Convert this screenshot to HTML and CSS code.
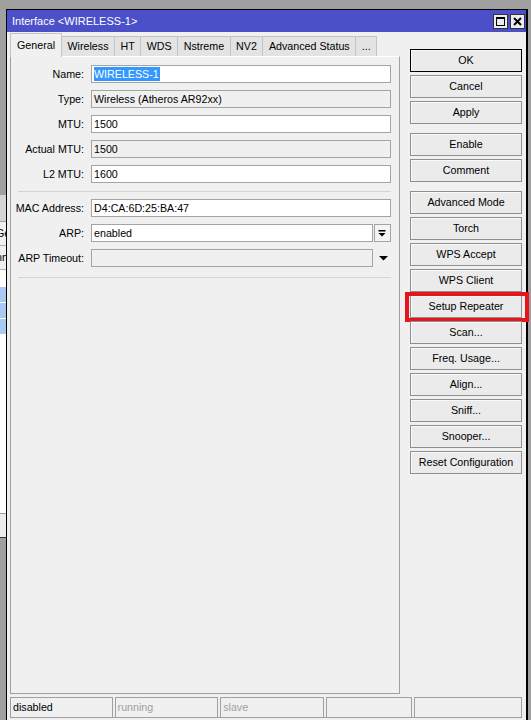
FILE: index.html
```html
<!DOCTYPE html>
<html>
<head>
<meta charset="utf-8">
<link rel="stylesheet" href="styles.css">
</head>
<body>
<div class="desktop">
  <div class="bgwin">
    <div class="bg-head"></div>
    <div class="bg-row"><span class="bg-text">Ge</span></div>
    <div class="bg-row"><span class="bg-text">nn</span></div>
    <div class="bg-gap"></div>
    <div class="bg-sel"></div>
    <div class="bg-sel"></div>
    <div class="bg-sel"></div>
    <div class="bg-white"></div>
    <div class="bg-foot"></div>
  </div>

  <div class="win">
    <div class="titlebar">
      <span class="title">Interface &lt;WIRELESS-1&gt;</span>
      <div class="tbtns">
        <span class="tbtn">
          <svg width="15" height="15" viewBox="0 0 15 15"><rect x="3.5" y="3.5" width="8" height="8" fill="none" stroke="#000" stroke-width="1"/><rect x="3" y="3" width="9" height="2" fill="#000"/></svg>
        </span>
        <span class="tbtn">
          <svg width="15" height="15" viewBox="0 0 15 15"><path d="M4 4 L11 11 M11 4 L4 11" stroke="#000" stroke-width="2" fill="none"/></svg>
        </span>
      </div>
    </div>

    <div class="body">
      <div class="leftcol">
        <div class="tabs">
          <div class="tab active">General</div>
          <div class="tab">Wireless</div>
          <div class="tab">HT</div>
          <div class="tab">WDS</div>
          <div class="tab">Nstreme</div>
          <div class="tab">NV2</div>
          <div class="tab">Advanced Status</div>
          <div class="tab">...</div>
        </div>
        <div class="panel">
          <div class="group">
            <div class="row"><label class="lbl">Name:</label><div class="field"><span class="sel">WIRELESS-1</span></div></div>
            <div class="row"><label class="lbl">Type:</label><div class="field ro">Wireless (Atheros AR92xx)</div></div>
            <div class="row"><label class="lbl">MTU:</label><div class="field">1500</div></div>
            <div class="row"><label class="lbl">Actual MTU:</label><div class="field ro">1500</div></div>
            <div class="row"><label class="lbl">L2 MTU:</label><div class="field">1600</div></div>
          </div>
          <div class="sep"></div>
          <div class="group">
            <div class="row"><label class="lbl">MAC Address:</label><div class="field">D4:CA:6D:25:BA:47</div></div>
            <div class="row"><label class="lbl">ARP:</label>
              <div class="combo">
                <div class="field">enabled</div>
                <div class="dd">
                  <svg width="15" height="16" viewBox="0 0 15 16"><rect x="3.5" y="5" width="7" height="1.5" fill="#000"/><polygon points="3.5,8 10.5,8 7,11.5" fill="#000"/></svg>
                </div>
              </div>
            </div>
            <div class="row"><label class="lbl">ARP Timeout:</label>
              <div class="combo">
                <div class="field ro"></div>
                <div class="dd plain">
                  <svg width="17" height="18" viewBox="0 0 17 18"><polygon points="5,7 14,7 9.5,11.5" fill="#000"/></svg>
                </div>
              </div>
            </div>
          </div>
          <div class="sep sep2"></div>
        </div>
      </div>

      <div class="btncol">
        <div class="btn ok">OK</div>
        <div class="btn">Cancel</div>
        <div class="btn">Apply</div>
        <div class="btn grp">Enable</div>
        <div class="btn">Comment</div>
        <div class="btn grp">Advanced Mode</div>
        <div class="btn">Torch</div>
        <div class="btn">WPS Accept</div>
        <div class="btn">WPS Client</div>
        <div class="btn hl">Setup Repeater<span class="redbox"></span></div>
        <div class="btn">Scan...</div>
        <div class="btn">Freq. Usage...</div>
        <div class="btn">Align...</div>
        <div class="btn">Sniff...</div>
        <div class="btn">Snooper...</div>
        <div class="btn">Reset Configuration</div>
      </div>

      <div class="status">
        <div class="cell c1">disabled</div>
        <div class="cell c2 dim">running</div>
        <div class="cell c3 dim">slave</div>
        <div class="cell c4"></div>
        <div class="cell c5"></div>
      </div>
      <div class="bottomline"></div>
    </div>
  </div>
</div>
</body>
</html>
```

FILE: styles.css
```css
html, body {
  margin: 0;
  padding: 0;
}
body {
  background: #a0a0a0;
  font-family: "Liberation Sans", Arial, sans-serif;
  font-size: 10.7px;
  color: #000;
  overflow: hidden;
}
.desktop {
  position: relative;
  width: 531px;
  height: 720px;
  overflow: hidden;
}

/* background window peeking out at the left edge */
.bgwin {
  position: absolute;
  left: 0;
  top: 195px;
  width: 40px;
  display: flex;
  flex-direction: column;
  background: #fff;
}
.bg-head {
  height: 26px;
  background: #d5d5d5;
  border-bottom: 1px solid #a0a0a0;
}
.bg-row {
  height: 23px;
  background: #f0f0f0;
  border-bottom: 1px solid #b0b0b0;
  line-height: 23px;
  white-space: nowrap;
  overflow: hidden;
}
.bg-text {
  display: inline-block;
  margin-left: -4px;
}
.bg-gap {
  height: 17px;
  background: #fff;
}
.bg-sel {
  height: 15px;
  background: #a9c9f0;
  border-bottom: 1px solid #fff;
}
.bg-white {
  height: 178px;
  background: #fff;
  border-bottom: 1px solid #a0a0a0;
}
.bg-foot {
  height: 23px;
  background: #ececec;
  border-bottom: 1px solid #303030;
}

/* main window */
.win {
  position: absolute;
  left: 6px;
  top: 9px;
  width: 519px;
  height: 730px;
  border: 1px solid #000;
  border-right-width: 2px;
  background: #f0f0f0;
}
.titlebar {
  height: 22px;
  background: #4b50c9;
  color: #fff;
  display: flex;
  align-items: center;
  justify-content: space-between;
  padding: 0 1px 0 5px;
}
.title {
  font-size: 11px;
}
.tbtns {
  display: flex;
  gap: 2px;
}
.tbtn {
  width: 15px;
  height: 15px;
  box-sizing: border-box;
  background: #ececec;
  border: 1px solid #333;
  display: flex;
  align-items: center;
  justify-content: center;
}
.tbtn svg {
  display: block;
  margin: -1px;
}

.body {
  display: grid;
  grid-template-columns: 390px 112px;
  column-gap: 10px;
  padding: 1px 0 0 3px;
}

/* tabs */
.tabs {
  display: flex;
  align-items: flex-end;
  height: 23px;
  position: relative;
  z-index: 2;
}
.tab {
  height: 20px;
  box-sizing: border-box;
  padding: 0 5.5px;
  border: 1px solid #c4c4c4;
  border-bottom: none;
  margin-left: -1px;
  background: #e3e3e3;
  line-height: 19px;
  white-space: nowrap;
}
.tab.active {
  height: 24px;
  margin-left: 0;
  margin-bottom: -1px;
  background: #f0f0f0;
  border-color: #c4c4c4;
  line-height: 22px;
  padding: 0 6px;
}

.panel {
  height: 638px;
  box-sizing: border-box;
  border: 1px solid #a0a0a0;
  border-top-color: #fff;
  padding: 8px 8px 0 0;
}
.group {
  display: flex;
  flex-direction: column;
  gap: 7px;
}
.row {
  display: grid;
  grid-template-columns: 73px 1fr;
  column-gap: 7px;
  align-items: center;
  height: 18px;
}
.lbl {
  text-align: right;
  white-space: nowrap;
}
.field {
  height: 18px;
  box-sizing: border-box;
  border: 1px solid #a4a4a4;
  background: #fff;
  padding: 0 2px;
  line-height: 16px;
  white-space: nowrap;
  overflow: hidden;
}
.field.ro {
  background: #f0f0f0;
}
.sel {
  background: #3399ff;
  color: #fff;
  padding: 1px 1px 1px 0;
}
.sep {
  border-top: 1px solid #d4d4d4;
  margin: 8px 0 7px 7px;
}
.sep2 {
  margin-top: 10px;
}
.combo {
  display: flex;
  gap: 1px;
}
.combo .field {
  flex: 1;
}
.dd {
  width: 17px;
  height: 18px;
  box-sizing: border-box;
  border: 1px solid #a4a4a4;
  background: #f4f4f4;
  display: flex;
  align-items: center;
  justify-content: center;
}
.dd.plain {
  border: none;
  background: transparent;
}
.dd svg {
  display: block;
}

/* right column buttons */
.btncol {
  display: flex;
  flex-direction: column;
  gap: 3px;
  padding-top: 16px;
}
.btn {
  height: 23px;
  box-sizing: border-box;
  border: 1px solid #8f8f8f;
  background: #ebebeb;
  box-shadow: inset 1px 1px 0 #fafafa;
  text-align: center;
  line-height: 21px;
  white-space: nowrap;
  position: relative;
}
.btn.ok {
  border-color: #000;
}
.btn.grp {
  margin-top: 6px;
}
.redbox {
  position: absolute;
  left: -6px;
  top: -4px;
  right: -8px;
  bottom: -5px;
  border: 4px solid #e8141c;
  pointer-events: none;
}

/* status bar */
.status {
  grid-column: 1 / -1;
  display: flex;
  gap: 2px;
  margin-top: 3px;
}
.cell {
  height: 20px;
  box-sizing: border-box;
  border: 1px solid #a0a0a0;
  border-bottom: none;
  padding-left: 2px;
  line-height: 19px;
}
.c1 { width: 103px; }
.c2 { width: 104px; }
.c3 { width: 104px; }
.c4 { width: 87px; }
.c5 { width: 108px; }
.dim {
  color: #a0a0a0;
}
.bottomline {
  grid-column: 1 / -1;
  border-top: 1px solid #a0a0a0;
  height: 10px;
}
```
